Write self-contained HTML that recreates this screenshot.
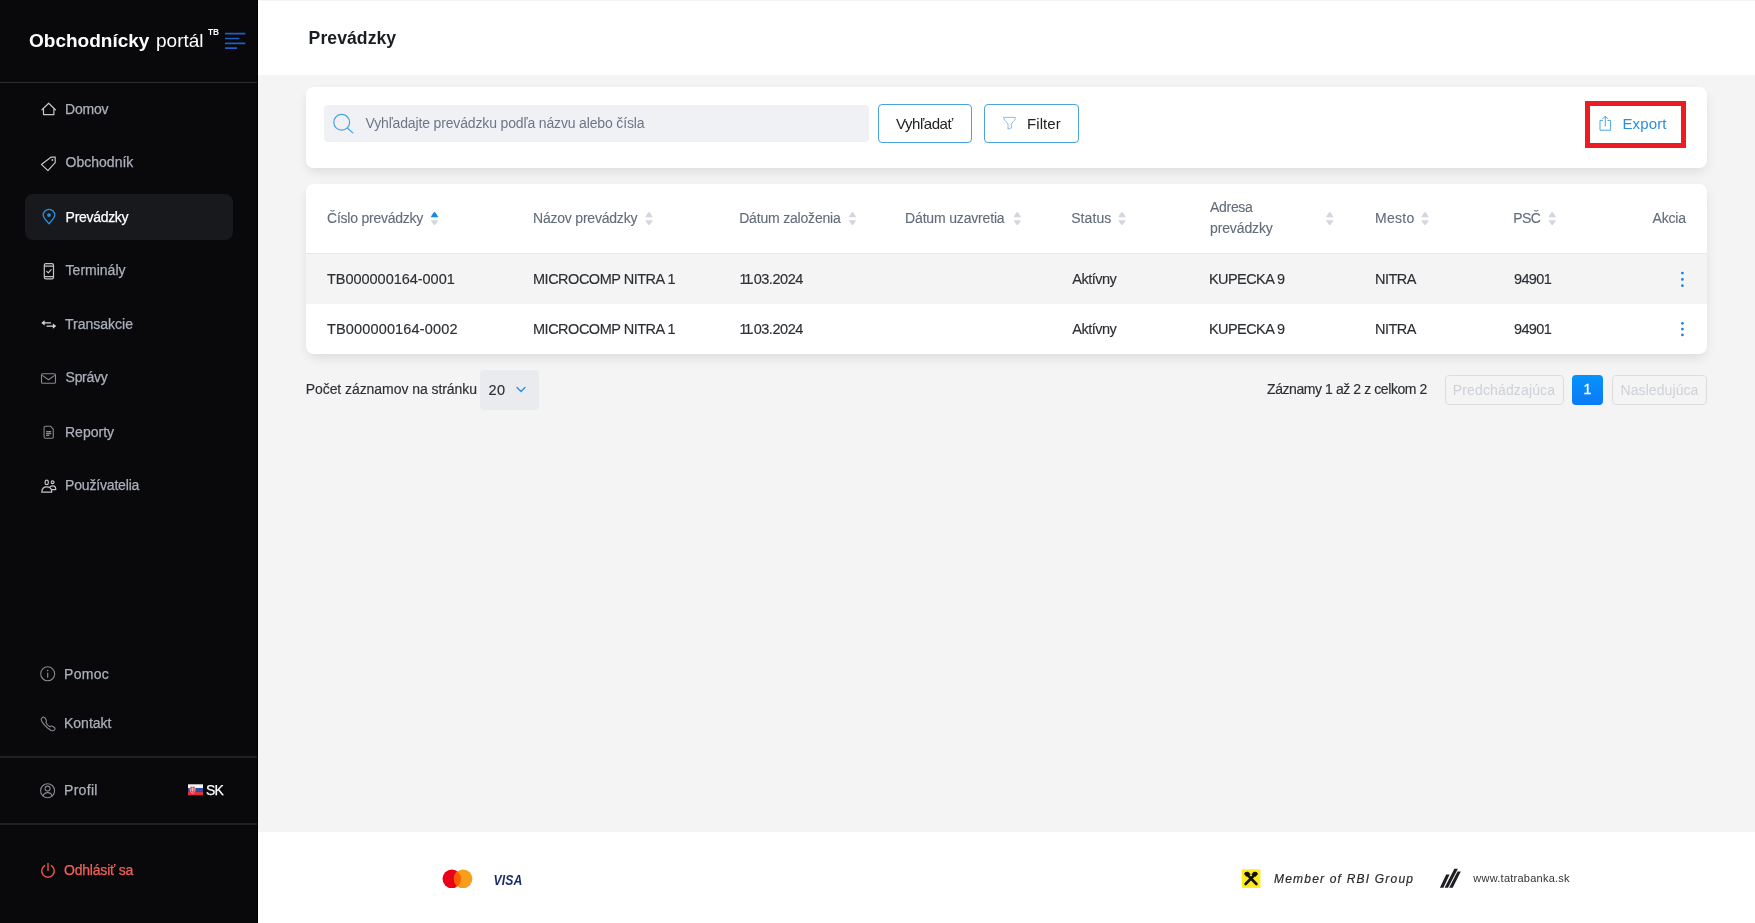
<!DOCTYPE html>
<html lang="sk">
<head>
<meta charset="utf-8">
<title>Prevádzky</title>
<style>
*{box-sizing:border-box;margin:0;padding:0}
html,body{width:1755px;height:923px;overflow:hidden}
body{font-family:"Liberation Sans",sans-serif;background:#f4f4f4;color:#222;position:relative}
/* sidebar */
#side{will-change:transform;position:absolute;left:0;top:0;width:258px;height:923px;background:#09090b;color:#b3b9c4}
#side .hr{position:absolute;left:0;width:258px;height:1px;background:#2b2d31}
#logo{position:absolute;left:29px;top:29.2px;font-size:19px;line-height:24px;color:#fff;white-space:nowrap}
#logo b{font-weight:700}
.nv{-webkit-text-stroke:.25px currentColor;position:absolute;font-size:14px;line-height:20px;color:#aab0bb;white-space:nowrap}
.nv.on{color:#fff}
#act{position:absolute;left:25px;top:194px;width:208px;height:45.5px;border-radius:8px;background:#18191d}
#icons{position:absolute;left:0;top:0}
#logo sup{position:absolute;left:179px;top:-2.5px;font-size:8.3px;font-weight:700;line-height:10px}
/* main */
#top{position:absolute;left:258px;top:0;width:1497px;height:75px;background:#fff}
#title{position:absolute;left:308.6px;top:26px;font-size:17.6px;font-weight:700;line-height:24px;color:#1a1d21}
.card{position:absolute;left:306px;width:1401px;background:#fff;border-radius:8px;box-shadow:0 5px 12px -2px rgba(0,0,0,.11)}
#footer{position:absolute;left:258px;top:832px;width:1497px;height:91px;background:#fff}

.t{position:absolute;white-space:nowrap;line-height:20px;font-size:14.5px}
.th{color:#626c7b;font-size:14px;-webkit-text-stroke:.12px currentColor}
.td{color:#2c2f34;-webkit-text-stroke:.15px currentColor}
#search{position:absolute;left:323.5px;top:105px;width:545.5px;height:37.4px;background:#eff1f5;border-radius:4px}
#search .ph{position:absolute;left:42px;top:8px;font-size:14px;line-height:20px;color:#6e7686;white-space:nowrap}
.btn{position:absolute;top:104px;height:39px;border:1px solid #4aa3df;border-radius:4px;background:#fff;font-size:15px;line-height:37px;color:#222;white-space:nowrap}
#export{position:absolute;left:1585px;top:101px;width:101px;height:47px;border:5px solid #ed1c24;background:#fff}
#export span{position:absolute;left:32.5px;top:8px;font-size:15px;line-height:20px;color:#2b8fe0;white-space:nowrap}
#rowbg{position:absolute;left:306px;top:254px;width:1401px;height:50px;background:#f4f4f4}
#hline{position:absolute;left:306px;top:253px;width:1401px;height:1px;background:#e6e9ee}
.pbtn{position:absolute;top:375px;height:30px;border:1px solid #dddddd;border-radius:4px;font-size:14px;line-height:28px;color:#ced1d7;text-align:center;white-space:nowrap}
#sel{position:absolute;left:480px;top:370px;width:58.5px;height:39.5px;background:#e9ebef;border-radius:4px}

#visa{position:absolute;left:235.5px;top:39.5px;font-size:12.2px;line-height:16px;font-weight:700;font-style:italic;color:#1a2d6e;transform:scaleY(1.18);transform-origin:0 50%}
#rbi{position:absolute;left:1016px;top:38.8px;font-size:12px;line-height:16px;font-style:italic;color:#2a2a2a;-webkit-text-stroke:.2px #2a2a2a;white-space:nowrap}
#www{position:absolute;left:1215.3px;top:38px;font-size:11px;line-height:16px;color:#333;white-space:nowrap}
#main{position:absolute;left:0;top:0;width:1755px;height:923px;will-change:transform}
/*LS*/
#h1{letter-spacing:-0.23px}
#h2{letter-spacing:-0.21px}
#h3{letter-spacing:-0.19px}
#h4{letter-spacing:-0.17px}
#h5{letter-spacing:0.08px}
#h6a{letter-spacing:-0.3px}
#h6b{letter-spacing:-0.12px}
#h7{letter-spacing:0.3px}
#h8{letter-spacing:-0.65px}
#h9{letter-spacing:-0.2px}
#r1c1{letter-spacing:-0.03px}
#r2c1{letter-spacing:0.15px}
#r1c2{letter-spacing:-0.49px}
#r2c2{letter-spacing:-0.49px}
#r1c3{letter-spacing:-0.45px}
#r2c3{letter-spacing:-0.45px}
#r1c5{letter-spacing:-0.48px}
#r2c5{letter-spacing:-0.48px}
#r1c6{letter-spacing:-0.57px}
#r2c6{letter-spacing:-0.57px}
#r1c7{letter-spacing:-0.5px}
#r2c7{letter-spacing:-0.5px}
#r1c8{letter-spacing:-0.65px}
#r2c8{letter-spacing:-0.65px}
#pg1{letter-spacing:-0.06px}
#pg2{letter-spacing:0.4px}
#pg3{letter-spacing:-0.42px}
#pb1{letter-spacing:0.14px}
#pb2{letter-spacing:0.08px}
#n1{letter-spacing:-0.2px}
#n3{letter-spacing:-0.3px}
#n6{letter-spacing:-0.3px}
#n8{letter-spacing:-0.17px}
#n9{letter-spacing:0.3px}
#n11{letter-spacing:0.3px}
#n13{letter-spacing:-0.2px}
#n12{letter-spacing:-0.8px}
#visa{letter-spacing:0.13px}
#rbi{letter-spacing:1.2px}
#www{letter-spacing:0.25px}
#ph{letter-spacing:-0.15px}
#b1{letter-spacing:-0.46px}
#b2{letter-spacing:0.08px}
#ex{letter-spacing:0.12px}
#title{letter-spacing:0.06px}
/*ENDLS*/
</style>
</head>
<body>
<div id="side">
  <div id="logo"><b id="lg1">Obchodnícky</b> <span id="lg2" style="margin-left:1.4px">portál</span><sup id="lg3">TB</sup></div>
  <div class="hr" style="top:82px"></div>
  <div id="act"></div>
  <span class="nv" id="n1" style="left:65px;top:99.05px">Domov</span>
  <span class="nv" id="n2" style="left:65.6px;top:152.15px">Obchodník</span>
  <span class="nv on" id="n3" style="left:65.6px;top:206.65px">Prevádzky</span>
  <span class="nv" id="n4" style="left:65.6px;top:260.25px">Terminály</span>
  <span class="nv" id="n5" style="left:65px;top:313.95px">Transakcie</span>
  <span class="nv" id="n6" style="left:65.6px;top:366.85px">Správy</span>
  <span class="nv" id="n7" style="left:65px;top:421.65px">Reporty</span>
  <span class="nv" id="n8" style="left:65px;top:475.25px">Používatelia</span>
  <span class="nv" id="n9" style="left:64px;top:663.5px">Pomoc</span>
  <span class="nv" id="n10" style="left:64px;top:713px">Kontakt</span>
  <div class="hr" style="top:756px;height:2px;background:#1e2023;width:257px"></div>
  <span class="nv" id="n11" style="left:64px;top:780px">Profil</span>
  <span class="nv on" id="n12" style="left:205.9px;top:780px">SK</span>
  <div class="hr" style="top:823px;height:2px;background:#1e2023;width:257px"></div>
  <span class="nv" id="n13" style="left:64px;top:859.7px;color:#f0605c">Odhlásiť sa</span>
  <svg id="icons" width="258" height="923" viewBox="0 0 258 923" fill="none" stroke-linecap="round" stroke-linejoin="round">
  <g stroke="#c2c5cb" stroke-width="1.2">
    <!-- home -->
    <path d="M42 109.8 L48.7 103.2 L55.4 109.8"/><path d="M43.5 109.2 V114.6 H53.9 V109.2"/>
    <!-- tag -->
    <path d="M51.2 157.1 H55.2 V162.6 L47.9 170.6 L41.4 164.4 Z"/><circle cx="52.4" cy="160" r=".9" fill="#c2c5cb" stroke="none"/>
    <!-- terminal -->
    <rect x="44.3" y="263.7" width="9.2" height="15.2" rx="1.6"/><path d="M44.6 266.2 H53.2 M44.6 276.6 H53.2"/><path d="M46.7 271.3 L48.3 272.9 L51.2 269.6"/>
    <!-- users -->
    <rect x="45.1" y="480.2" width="3.2" height="4.4" rx="1.6"/><path d="M41.8 492.2 C41.8 488.6 44.2 486.9 46.8 486.9 S51.8 488.6 51.8 492.2 Z"/>
    <circle cx="52.6" cy="482.3" r="1.4"/><path d="M50.3 486.6 C51 486 51.8 485.8 52.7 485.8 C54.6 485.8 55.8 487.3 55.8 489.6 H52.3"/>
  </g>
  <!-- transakcie -->
  <g stroke="#d6d8dc" stroke-width="1.3" fill="#d6d8dc">
    <path d="M44 322.9 H50.5"/><path d="M41.3 322.9 L44.6 320.3 V325.5 Z" stroke="none"/>
    <path d="M47 326.1 H53.5"/><path d="M56.2 326.1 L52.9 323.5 V328.7 Z" stroke="none"/>
  </g>
  <!-- pin -->
  <g stroke="#2e8fd8" stroke-width="1.3">
    <path d="M49 223.7 C45.2 219.8 43.2 217.6 43.2 215.1 A5.8 5.8 0 0 1 54.8 215.1 C54.8 217.6 52.8 219.8 49 223.7 Z"/>
    <circle cx="49" cy="215.1" r="1.9" fill="#2e8fd8" stroke="none"/>
  </g>
  <g stroke="#85888f" stroke-width="1.1">
    <!-- mail -->
    <rect x="41.5" y="373.7" width="14" height="9.6" rx="1.3"/><path d="M42.6 375.6 L48.5 379.8 L54.4 375.6"/>
    <!-- report -->
    <path d="M45.3 426.2 H50.4 L53.3 429.1 V437 A1.2 1.2 0 0 1 52.1 438.2 H45.3 A1.2 1.2 0 0 1 44.1 437 V427.4 A1.2 1.2 0 0 1 45.3 426.2 Z"/>
    <path d="M46.6 431.6 H50.8 M46.6 433.5 H50.8 M46.6 435.4 H48.8" stroke-width="1.3"/>
    <!-- info -->
    <circle cx="47.7" cy="673.8" r="7"/><path d="M47.7 673 V677.2" stroke-width="1.2"/><circle cx="47.7" cy="670.6" r=".8" fill="#85888f" stroke="none"/>
    <!-- phone -->
    <path d="M42.2 717.6 C43.2 716.7 44.6 717.2 45.3 718.4 L46.3 720.2 C46.8 721.1 46.4 721.9 45.8 722.5 C46.7 724.3 48.2 725.8 50 726.7 C50.6 726.1 51.4 725.7 52.3 726.2 L54.1 727.2 C55.3 727.9 55.3 729.3 54.4 730.2 C52.9 731.6 50.6 730.6 47.6 728 C44.2 725 41.5 721.5 41.2 719.4 C41.1 718.6 41.6 718.1 42.2 717.6 Z"/>
    <!-- profil -->
    <circle cx="47.6" cy="790.7" r="7"/><circle cx="47.6" cy="788.6" r="2.5"/><path d="M43.2 796 C43.6 793.6 45.3 792.6 47.6 792.6 S51.6 793.6 52 796"/>
  </g>
  <!-- power -->
  <g stroke="#e8524f" stroke-width="1.4">
    <path d="M44.6 865.6 A6.3 6.3 0 1 0 51.4 865.6"/><path d="M48 863.4 V870.4"/>
  </g>
  <!-- flag -->
  <g stroke="none">
    <rect x="188" y="784.3" width="15" height="3.8" fill="#f4f4f4"/><rect x="188" y="788" width="15" height="3.7" fill="#2a4fa3"/><rect x="188" y="791.6" width="15" height="3.7" fill="#e0323c"/>
    <path d="M190.2 786.6 H195 V790.4 C195 792 193.6 792.9 192.6 793.3 C191.6 792.9 190.2 792 190.2 790.4 Z" fill="#e0323c" stroke="#f4f4f4" stroke-width=".6"/>
    <path d="M192.6 787.6 V791.6 M191.4 788.8 H193.8 M191.2 790 H194" stroke="#f4f4f4" stroke-width=".5"/>
  </g>
  <!-- menu -->
  <g stroke="#1d5fc2" stroke-width="1.7" stroke-linecap="butt">
    <path d="M225 33.7 H245.3 M225 38.5 H239.3 M225 43.3 H245.3 M225 48.1 H237"/>
  </g>
  </svg>
</div>
<div id="main">
<div id="top"></div>
<div style="position:absolute;left:259px;top:0;width:1496px;height:1px;background:#f3f3f3"></div>
<div style="position:absolute;left:257px;top:0;width:1px;height:923px;background:#000"></div>
<div id="title">Prevádzky</div>
<div class="card" id="c1" style="top:87.4px;height:80.6px"></div>
<div class="card" id="c2" style="top:184px;height:169.5px"></div>

<div id="search"><span class="ph" id="ph">Vyhľadajte prevádzku podľa názvu alebo čísla</span></div>
<div class="btn" style="left:878px;width:94px"><span id="b1" style="position:absolute;left:17px">Vyhľadať</span></div>
<div class="btn" style="left:984px;width:95px"><span id="b2" style="position:absolute;left:42px">Filter</span></div>
<div id="export"><span id="ex">Export</span></div>
<div id="hline"></div>
<div id="rowbg"></div>
<span class="t th" id="h1" style="left:327px;top:207.8px">Číslo prevádzky</span>
<span class="t th" id="h2" style="left:533px;top:207.8px">Názov prevádzky</span>
<span class="t th" id="h3" style="left:739.2px;top:207.8px">Dátum založenia</span>
<span class="t th" id="h4" style="left:905.1px;top:207.8px">Dátum uzavretia</span>
<span class="t th" id="h5" style="left:1071.2px;top:207.8px">Status</span>
<span class="t th" id="h6a" style="left:1210px;top:196.8px">Adresa</span>
<span class="t th" id="h6b" style="left:1210px;top:217.8px">prevádzky</span>
<span class="t th" id="h7" style="left:1375px;top:207.8px">Mesto</span>
<span class="t th" id="h8" style="left:1513.3px;top:207.8px">PSČ</span>
<span class="t th" id="h9" style="left:1652.5px;top:207.8px">Akcia</span>

<span class="t td" id="r1c1" style="left:327px;top:269px">TB000000164-0001</span>
<span class="t td" id="r1c2" style="left:533px;top:269px">MICROCOMP NITRA 1</span>
<span class="t td" id="r1c3" style="left:739.6px;top:269px"><span style="letter-spacing:-2.3px">11</span>.03.2024</span>
<span class="t td" id="r1c5" style="left:1072.2px;top:269px">Aktívny</span>
<span class="t td" id="r1c6" style="left:1209px;top:269px">KUPECKA 9</span>
<span class="t td" id="r1c7" style="left:1375px;top:269px">NITRA</span>
<span class="t td" id="r1c8" style="left:1514px;top:269px">94901</span>

<span class="t td" id="r2c1" style="left:327px;top:318.5px">TB000000164-0002</span>
<span class="t td" id="r2c2" style="left:533px;top:318.5px">MICROCOMP NITRA 1</span>
<span class="t td" id="r2c3" style="left:739.6px;top:318.5px"><span style="letter-spacing:-2.3px">11</span>.03.2024</span>
<span class="t td" id="r2c5" style="left:1072.2px;top:318.5px">Aktívny</span>
<span class="t td" id="r2c6" style="left:1209px;top:318.5px">KUPECKA 9</span>
<span class="t td" id="r2c7" style="left:1375px;top:318.5px">NITRA</span>
<span class="t td" id="r2c8" style="left:1514px;top:318.5px">94901</span>


<span class="t td" id="pg1" style="left:305.7px;top:378.5px;font-size:14px">Počet záznamov na stránku</span>
<div id="sel"><span class="t td" id="pg2" style="left:8.5px;top:10px;font-size:14.5px">20</span></div>
<span class="t td" id="pg3" style="left:1267px;top:378.8px;font-size:14px">Záznamy 1 až 2 z celkom 2</span>
<div class="pbtn" style="left:1444.5px;width:119px"><span id="pb1">Predchádzajúca</span></div>
<div class="pbtn" style="left:1572px;width:31px;background:linear-gradient(#0693fc,#0b7af6);border:0;line-height:29px;color:#fff;-webkit-text-stroke:.3px #fff"><span>1</span></div>
<div class="pbtn" style="left:1612px;width:95px"><span id="pb2">Nasledujúca</span></div>
<svg id="mi" width="1497" height="430" viewBox="258 0 1497 430" style="position:absolute;left:258px;top:0" fill="none" stroke-linecap="round" stroke-linejoin="round">
  <g stroke="#4ba3dc" stroke-width="1.2">
    <circle cx="341.7" cy="122.3" r="7.9"/><path d="M347.4 128 L352.8 132.9"/>
  </g>
  <path d="M1003.9 117.4 H1015.3 V118.4 C1015.3 121.4 1011.4 122 1011.4 124.6 V128 L1008 129.2 V124.6 C1008 122 1003.9 121.4 1003.9 118.4 Z" stroke="#7fb9e2" stroke-width=".9"/>
  <g stroke="#4aa6e4" stroke-width="1">
    <path d="M1602.6 120.4 H1600 V130.2 H1610.6 V120.4 H1608"/><path d="M1605.3 126 V116.4 M1602.9 118.6 L1605.3 116.2 L1607.7 118.6"/>
  </g>
  <circle cx="1682.4" cy="273.1" r="1.4" fill="#2484dc"/><circle cx="1682.4" cy="279.4" r="1.4" fill="#2484dc"/><circle cx="1682.4" cy="285.7" r="1.4" fill="#2484dc"/><circle cx="1682.4" cy="323.3" r="1.4" fill="#2484dc"/><circle cx="1682.4" cy="329.1" r="1.4" fill="#2484dc"/><circle cx="1682.4" cy="334.9" r="1.4" fill="#2484dc"/>
  <path d="M517 387.6 L521 391.4 L525 387.6" stroke="#2b8fe0" stroke-width="1.4"/>
  <path d="M430.6 217.3 L433.6 212.5 Q434.5 211.5 435.4 212.5 L438.4 217.3 Z" fill="#1489e6"/><path d="M430.6 220.3 L433.6 224.5 Q434.5 225.5 435.4 224.5 L438.4 220.3 Z" fill="#d3d7dd"/><path d="M645.1 217.3 L648.1 212.5 Q649.0 211.5 649.9 212.5 L652.9 217.3 Z" fill="#d3d7dd"/><path d="M645.1 220.3 L648.1 224.5 Q649.0 225.5 649.9 224.5 L652.9 220.3 Z" fill="#d3d7dd"/><path d="M848.5 217.3 L851.5 212.5 Q852.4 211.5 853.3 212.5 L856.3 217.3 Z" fill="#d3d7dd"/><path d="M848.5 220.3 L851.5 224.5 Q852.4 225.5 853.3 224.5 L856.3 220.3 Z" fill="#d3d7dd"/><path d="M1013.4 217.3 L1016.4 212.5 Q1017.3 211.5 1018.2 212.5 L1021.2 217.3 Z" fill="#d3d7dd"/><path d="M1013.4 220.3 L1016.4 224.5 Q1017.3 225.5 1018.2 224.5 L1021.2 220.3 Z" fill="#d3d7dd"/><path d="M1118.1 217.3 L1121.1 212.5 Q1122.0 211.5 1122.9 212.5 L1125.9 217.3 Z" fill="#d3d7dd"/><path d="M1118.1 220.3 L1121.1 224.5 Q1122.0 225.5 1122.9 224.5 L1125.9 220.3 Z" fill="#d3d7dd"/><path d="M1325.8 217.3 L1328.8 212.5 Q1329.7 211.5 1330.6 212.5 L1333.6 217.3 Z" fill="#d3d7dd"/><path d="M1325.8 220.3 L1328.8 224.5 Q1329.7 225.5 1330.6 224.5 L1333.6 220.3 Z" fill="#d3d7dd"/><path d="M1421.1 217.3 L1424.1 212.5 Q1425.0 211.5 1425.9 212.5 L1428.9 217.3 Z" fill="#d3d7dd"/><path d="M1421.1 220.3 L1424.1 224.5 Q1425.0 225.5 1425.9 224.5 L1428.9 220.3 Z" fill="#d3d7dd"/><path d="M1548.3 217.3 L1551.3 212.5 Q1552.2 211.5 1553.1 212.5 L1556.1 217.3 Z" fill="#d3d7dd"/><path d="M1548.3 220.3 L1551.3 224.5 Q1552.2 225.5 1553.1 224.5 L1556.1 220.3 Z" fill="#d3d7dd"/>
</svg>
<div id="footer">
  <svg width="1497" height="91" viewBox="258 832 1497 91" style="position:absolute;left:0;top:0">
    <circle cx="451.8" cy="878.8" r="9.3" fill="#eb001b"/>
    <circle cx="463.1" cy="878.8" r="9.3" fill="#f79e1b"/>
    <path d="M457.45 871.4 A9.3 9.3 0 0 1 457.45 886.2 A9.3 9.3 0 0 1 457.45 871.4 Z" fill="#ff5f00"/>
    <rect x="1241.8" y="869.3" width="18.6" height="18.6" fill="#fdeb1b"/>
    <g stroke="#141204" stroke-width="2.7" stroke-linecap="round" fill="none">
      <path d="M1245.6 884 L1256 873.4"/><path d="M1256.4 884 L1246 873.4"/>
    </g>
    <path d="M1244.3 874.4 C1244.2 872.2 1246.6 871 1248.8 872.2 L1250.6 874.6 L1246.6 876.8 Z M1257.7 874.4 C1257.8 872.2 1255.4 871 1253.2 872.2 L1251.4 874.6 L1255.4 876.8 Z" fill="#141204"/>
    <g fill="#1d1e21">
      <path d="M1439.9 887.7 L1446.2 874.6 L1449.6 874.6 L1443.4 887.7 Z"/>
      <path d="M1444.6 887.7 L1454.4 868.8 L1457.9 868.8 L1448 887.7 Z"/>
      <path d="M1449.2 887.7 L1457.5 871.5 L1460.8 871.5 L1452.7 887.7 Z"/>
    </g>
  </svg>
  <span id="visa">VISA</span>
  <span id="rbi">Member of RBI Group</span>
  <span id="www">www.tatrabanka.sk</span>
</div>
</div>
</body>
</html>
